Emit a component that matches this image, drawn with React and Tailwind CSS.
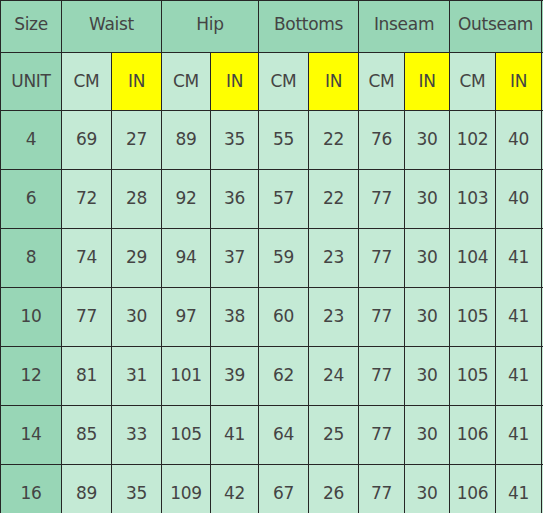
import React from 'react';

const groups = ['Waist', 'Hip', 'Bottoms', 'Inseam', 'Outseam'];

const rows = [
    ['4', 69, 27, 89, 35, 55, 22, 76, 30, 102, 40],
    ['6', 72, 28, 92, 36, 57, 22, 77, 30, 103, 40],
    ['8', 74, 29, 94, 37, 59, 23, 77, 30, 104, 41],
    ['10', 77, 30, 97, 38, 60, 23, 77, 30, 105, 41],
    ['12', 81, 31, 101, 39, 62, 24, 77, 30, 105, 41],
    ['14', 85, 33, 105, 41, 64, 25, 77, 30, 106, 41],
    ['16', 89, 35, 109, 42, 67, 26, 77, 30, 106, 41],
];

const widths = [61, 50, 50, 49, 48, 50, 50, 46, 45, 46, 46, 20];

const cell = 'border border-[#262626] text-center align-middle p-0 whitespace-nowrap';

const App = () => {
    return (
        <div className="w-[543px] h-[513px] overflow-hidden bg-[#c4ead5]">
            <table
                className="border-collapse table-fixed text-[#444] text-[17px] tracking-[-0.3px] font-['DejaVu_Sans',sans-serif]"
                style={{ width: widths.reduce((a, b) => a + b, 0) }}
            >
                <colgroup>
                    {widths.map((w, i) => (
                        <col key={i} style={{ width: w }} />
                    ))}
                </colgroup>
                <tbody>
                    {/* header */}
                    <tr className="h-[52px] bg-[#98d6b6]">
                        <td className={`${cell} pb-1`}>Size</td>
                        {groups.map((g) => (
                            <td key={g} colSpan={2} className={`${cell} pb-1`}>{g}</td>
                        ))}
                        <td className={cell}></td>
                    </tr>
                    {/* units */}
                    <tr className="h-[58px]">
                        <td className={`${cell} bg-[#98d6b6]`}>UNIT</td>
                        {groups.map((g) => (
                            <React.Fragment key={g}>
                                <td className={`${cell} bg-[#c4ead5]`}>CM</td>
                                <td className={`${cell} bg-[#ffff00]`}>IN</td>
                            </React.Fragment>
                        ))}
                        <td className={`${cell} bg-[#c4ead5]`}></td>
                    </tr>
                    {rows.map((r) => (
                        <tr key={r[0]} className="h-[59px]">
                            <td className={`${cell} bg-[#98d6b6]`}>{r[0]}</td>
                            {r.slice(1).map((v, i) => (
                                <td key={i} className={`${cell} bg-[#c4ead5]`}>{v}</td>
                            ))}
                            <td className={`${cell} bg-[#c4ead5]`}></td>
                        </tr>
                    ))}
                </tbody>
            </table>
        </div>
    );
};

export default App;
